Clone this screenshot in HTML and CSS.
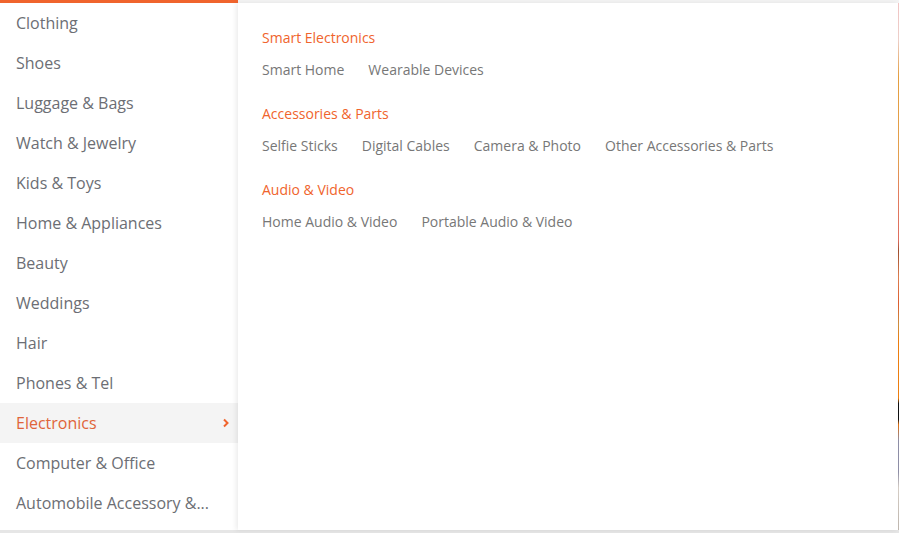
FILE: index.html
```html
<!DOCTYPE html>
<html>
<head>
<meta charset="utf-8">
<link rel="stylesheet" href="styles.css">
</head>
<body>
<div class="page">
  <ul class="menu">
    <li class="item">Clothing</li>
    <li class="item">Shoes</li>
    <li class="item">Luggage &amp; Bags</li>
    <li class="item">Watch &amp; Jewelry</li>
    <li class="item">Kids &amp; Toys</li>
    <li class="item">Home &amp; Appliances</li>
    <li class="item">Beauty</li>
    <li class="item">Weddings</li>
    <li class="item">Hair</li>
    <li class="item">Phones &amp; Tel</li>
    <li class="item active">Electronics<svg class="chev" width="8" height="10" viewBox="0 0 8 10"><path d="M2 1.5 L5.5 5 L2 8.5" fill="none" stroke="#f0642d" stroke-width="2"/></svg></li>
    <li class="item">Computer &amp; Office</li>
    <li class="item">Automobile Accessory &amp;...</li>
  </ul>
  <div class="panel">
    <div class="group">
      <div class="title">Smart Electronics</div>
      <div class="links"><span>Smart Home</span><span>Wearable Devices</span></div>
    </div>
    <div class="group">
      <div class="title">Accessories &amp; Parts</div>
      <div class="links"><span>Selfie Sticks</span><span>Digital Cables</span><span>Camera &amp; Photo</span><span>Other Accessories &amp; Parts</span></div>
    </div>
    <div class="group">
      <div class="title">Audio &amp; Video</div>
      <div class="links"><span>Home Audio &amp; Video</span><span>Portable Audio &amp; Video</span></div>
    </div>
  </div>
  <div class="edge"></div>
</div>
</body>
</html>
```

FILE: styles.css
```css
html, body {
  margin: 0;
  padding: 0;
  background: #e6e6e6;
}
body {
  font-family: "Open Sans", "Liberation Sans", sans-serif;
  width: 899px;
  height: 533px;
  overflow: hidden;
}
.page {
  display: flex;
  height: 530px;
  background: #f4f4f4;
}
.menu {
  list-style: none;
  margin: 0;
  padding: 0;
  width: 238px;
  flex: none;
  border-top: 3px solid #f0642d;
  background: #fff;
  position: relative;
  z-index: 1;
}
.item {
  height: 40px;
  display: flex;
  align-items: center;
  justify-content: space-between;
  padding: 0 8px 0 16px;
  font-size: 16px;
  color: #6c6e74;
}
.item.active {
  background: #f4f4f4;
  color: #e0643a;
}
.chev {
  display: block;
}
.panel {
  flex: 1;
  margin-top: 3px;
  background: #fff;
  box-shadow: -2px 0 5px rgba(0, 0, 0, 0.08);
  padding: 25px 24px 0 24px;
  position: relative;
  z-index: 2;
}
.group {
  margin-bottom: 24px;
}
.title {
  font-size: 14px;
  line-height: 20px;
  color: #f0642d;
  margin-bottom: 12px;
}
.links {
  display: flex;
  gap: 24px;
  font-size: 14px;
  line-height: 20px;
  color: #777;
}
.edge {
  width: 1px;
  flex: none;
  margin-top: 3px;
  background: linear-gradient(#f4c7c7 0%, #f0d2cc 7%, #e8a040 14%, #e6a050 30%, #e58060 36%, #e27060 45%, #a05030 47%, #e08050 52%, #e06030 57%, #d09040 61%, #f08010 64%, #f08010 75%, #111 76%, #111 79%, #e07010 80%, #9090a8 83%, #9090a8 89%, #d8d0c8 92%, #c0b8b0 100%);
}
```
